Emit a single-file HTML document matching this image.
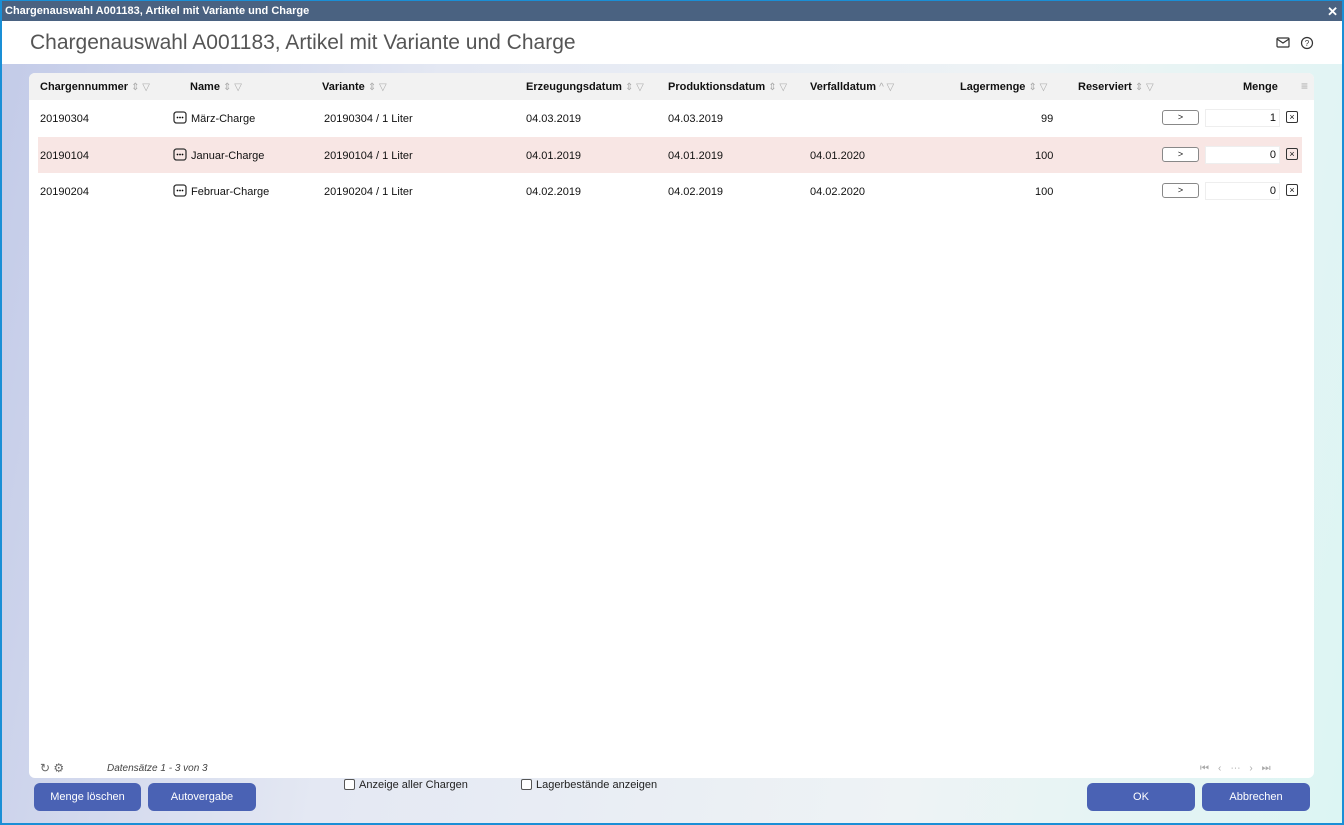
<!DOCTYPE html><html><head><style>
*{box-sizing:border-box;margin:0;padding:0}
body{width:1344px;height:825px;overflow:hidden;font-family:"Liberation Sans",sans-serif;font-size:11px;color:#111;position:relative;background:#fff}
.frame{position:absolute;inset:0;border:2px solid #1a8fd6;border-top:0}
.tb{position:absolute;left:0;top:0;width:1344px;height:21px;background:#4a6281;color:#fff;font-weight:bold;font-size:11px;line-height:21px;padding-left:5px;border-top:1px solid #1a8fd6}
.tb .x{position:absolute;right:6px;top:0;font-size:13px}
.hd{position:absolute;left:2px;top:21px;width:1340px;height:43px;background:#fff}
.hd h1{font-weight:normal;font-size:21px;color:#555;position:absolute;left:28px;top:10px}
.bg{position:absolute;left:2px;top:64px;width:1340px;height:759px;background:linear-gradient(100deg,#c3cbe8 0%,#e4e8f3 30%,#eef3f5 70%,#dcf5f3 100%)}
.panel{position:absolute;left:29px;top:73px;width:1285px;height:705px;background:#fff;border-radius:6px;overflow:hidden}
.th{position:absolute;top:0;left:0;width:100%;height:27px;background:#f2f2f2}
.c{position:absolute;white-space:nowrap}
.h{font-weight:bold;top:8px}
.ic{color:#aaa;font-weight:normal;font-size:10px}
.row{position:absolute;left:9px;width:1264px;height:36px}
.row .c{top:13px}
.pink{background:#f8e6e4}
.btn{position:absolute;width:37px;height:15px;border:1px solid #888;border-radius:3px;background:#fff;font-size:9px;text-align:center;line-height:13px;top:10px;left:1124px}
.inp{position:absolute;left:1167px;top:9px;width:75px;height:18px;background:#fff;border:1px solid #eee;text-align:right;padding-right:3px;line-height:17px}
.xb{position:absolute;left:1248px;top:11px;width:12px;height:12px;border:1px solid #333;border-radius:2px;font-size:9px;text-align:center;line-height:10px}
.dots{position:absolute;left:135px;top:11px}
.b{position:absolute;top:783px;height:28px;background:#4a62b4;color:#fff;border-radius:6px;font-size:11px;text-align:center;line-height:28px}
.cb{position:absolute;top:779px;font-size:11px;color:#222}
.cb i{display:inline-block;width:11px;height:11px;border:1px solid #555;border-radius:2px;vertical-align:-2px;margin-right:4px;background:#fff}
</style></head><body>
<div class="bg"></div>
<div class="tb">Chargenauswahl A001183, Artikel mit Variante und Charge<span class="x">✕</span></div>
<div class="hd"><h1>Chargenauswahl A001183, Artikel mit Variante und Charge</h1>
<svg style="position:absolute;left:1274px;top:16px" width="14" height="11" viewBox="0 0 14 11"><rect x="1" y="1" width="12" height="9" rx="1" fill="none" stroke="#333" stroke-width="1.2"/><path d="M1 2l6 4 6-4" fill="none" stroke="#333" stroke-width="1.2"/></svg>
<svg style="position:absolute;left:1298px;top:15px" width="14" height="14" viewBox="0 0 14 14"><circle cx="7" cy="7" r="5.5" fill="none" stroke="#333" stroke-width="1.2"/><text x="7" y="10" font-size="8" text-anchor="middle" fill="#333" font-family="Liberation Sans">?</text></svg>
</div>
<div class="panel">
<div class="th">
<span class="c h" style="left:11px">Chargennummer <span class="ic">⇕ ▽</span></span>
<span class="c h" style="left:161px">Name <span class="ic">⇕ ▽</span></span>
<span class="c h" style="left:293px">Variante <span class="ic">⇕ ▽</span></span>
<span class="c h" style="left:497px">Erzeugungsdatum <span class="ic">⇕ ▽</span></span>
<span class="c h" style="left:639px">Produktionsdatum <span class="ic">⇕ ▽</span></span>
<span class="c h" style="left:781px">Verfalldatum <span class="ic">^ ▽</span></span>
<span class="c h" style="left:931px">Lagermenge <span class="ic">⇕ ▽</span></span>
<span class="c h" style="left:1049px">Reserviert <span class="ic">⇕ ▽</span></span>
<span class="c h" style="left:1214px">Menge</span>
<span class="c h ic" style="left:1272px;font-size:12px;top:6px">≡</span>
</div>
<div class="row" style="top:27px"><span class="c" style="left:2px">20190304</span><svg class="dots" width="14" height="13" viewBox="0 0 14 13"><rect x="1" y="1" width="12" height="11" rx="2.5" fill="none" stroke="#333" stroke-width="1.3"/><circle cx="4.5" cy="6.5" r=".9"/><circle cx="7" cy="6.5" r=".9"/><circle cx="9.5" cy="6.5" r=".9"/></svg><span class="c" style="left:153px">März-Charge</span><span class="c" style="left:286px">20190304 / 1 Liter</span><span class="c" style="left:488px">04.03.2019</span><span class="c" style="left:630px">04.03.2019</span><span class="c" style="left:1003px">99</span><div class="btn">&gt;</div><div class="inp">1</div><div class="xb">×</div></div>
<div class="row pink" style="top:64px"><span class="c" style="left:2px">20190104</span><svg class="dots" width="14" height="13" viewBox="0 0 14 13"><rect x="1" y="1" width="12" height="11" rx="2.5" fill="none" stroke="#333" stroke-width="1.3"/><circle cx="4.5" cy="6.5" r=".9"/><circle cx="7" cy="6.5" r=".9"/><circle cx="9.5" cy="6.5" r=".9"/></svg><span class="c" style="left:153px">Januar-Charge</span><span class="c" style="left:286px">20190104 / 1 Liter</span><span class="c" style="left:488px">04.01.2019</span><span class="c" style="left:630px">04.01.2019</span><span class="c" style="left:772px">04.01.2020</span><span class="c" style="left:997px">100</span><div class="btn">&gt;</div><div class="inp">0</div><div class="xb">×</div></div>
<div class="row" style="top:100px"><span class="c" style="left:2px">20190204</span><svg class="dots" width="14" height="13" viewBox="0 0 14 13"><rect x="1" y="1" width="12" height="11" rx="2.5" fill="none" stroke="#333" stroke-width="1.3"/><circle cx="4.5" cy="6.5" r=".9"/><circle cx="7" cy="6.5" r=".9"/><circle cx="9.5" cy="6.5" r=".9"/></svg><span class="c" style="left:153px">Februar-Charge</span><span class="c" style="left:286px">20190204 / 1 Liter</span><span class="c" style="left:488px">04.02.2019</span><span class="c" style="left:630px">04.02.2019</span><span class="c" style="left:772px">04.02.2020</span><span class="c" style="left:997px">100</span><div class="btn">&gt;</div><div class="inp">0</div><div class="xb">×</div></div>
<span class="c" style="left:11px;top:688px;color:#666;font-size:12px">↻ ⚙</span>
<span class="c" style="left:78px;top:690px;font-style:italic;font-size:10px;color:#444">Datensätze 1 - 3 von 3</span>
<span class="c" style="left:1171px;top:690px;color:#aaa;font-size:10px;letter-spacing:9px">⏮‹⋯›⏭</span>
</div>
<div class="b" style="left:34px;width:107px">Menge löschen</div>
<div class="b" style="left:148px;width:108px">Autovergabe</div>
<div class="cb" style="left:344px"><i></i>Anzeige aller Chargen</div>
<div class="cb" style="left:521px"><i></i>Lagerbestände anzeigen</div>
<div class="b" style="left:1087px;width:108px">OK</div>
<div class="b" style="left:1202px;width:108px">Abbrechen</div>
<div class="frame"></div>
</body></html>
